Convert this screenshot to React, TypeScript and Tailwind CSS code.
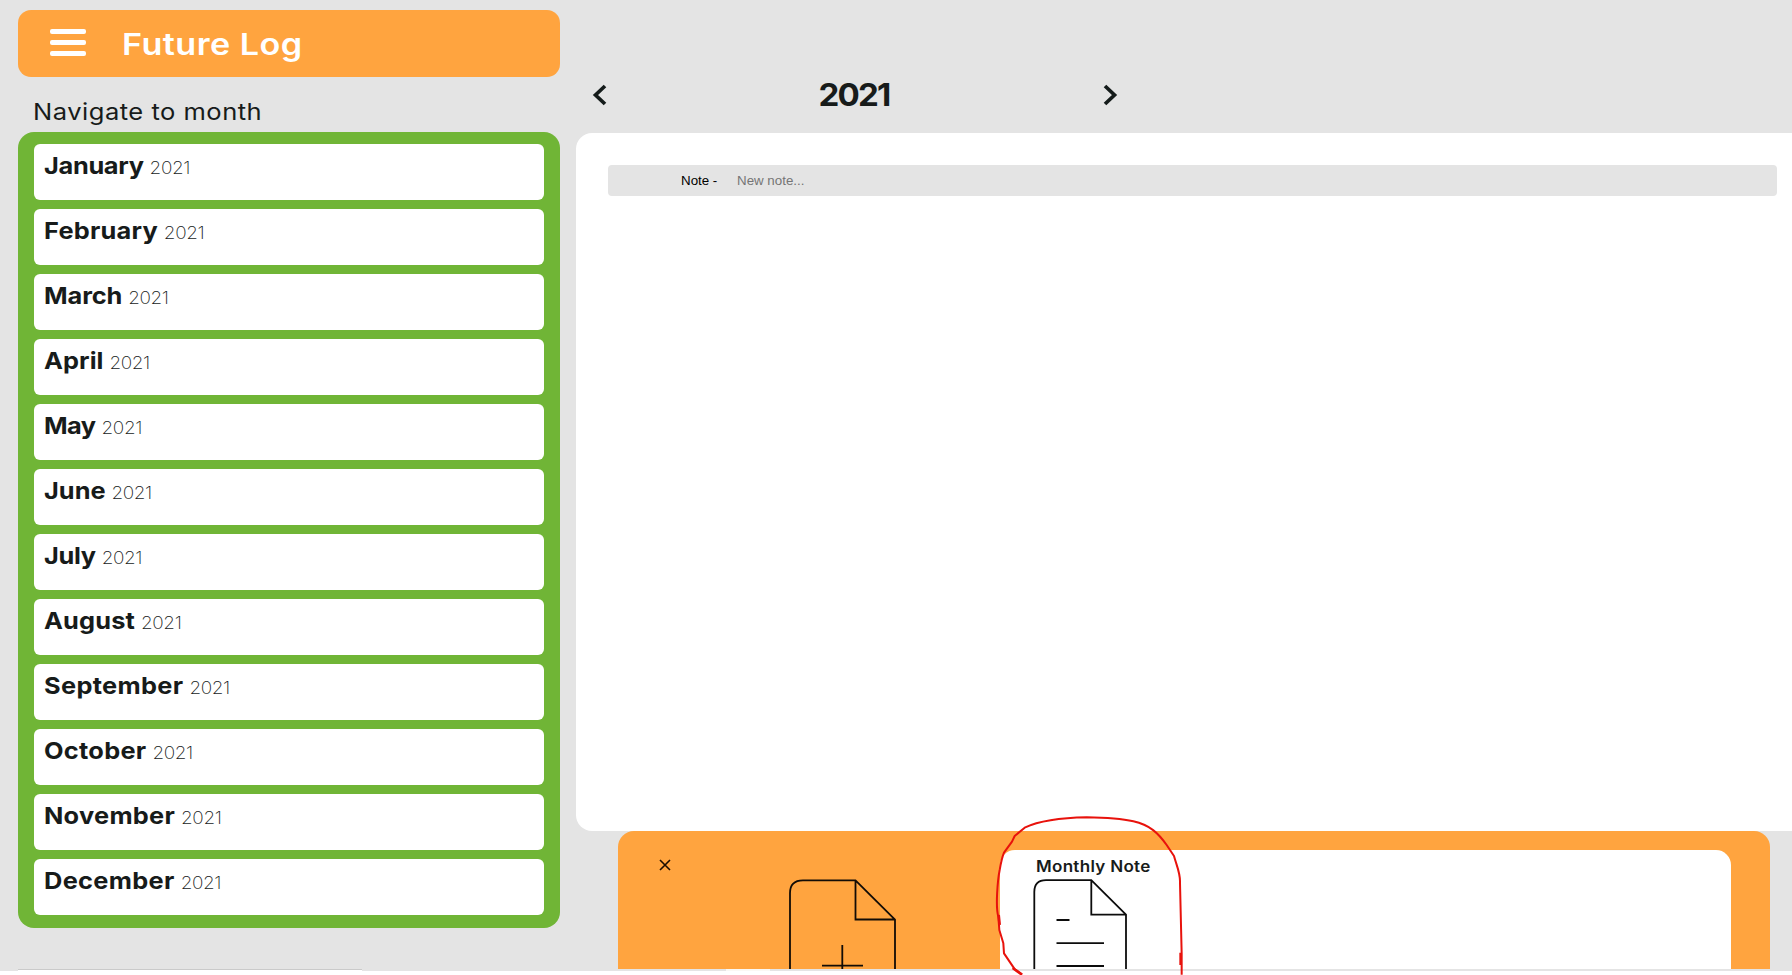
const months = [
  { name: 'January', tracking: 'tracking-[-0.3px]' },
  { name: 'February', tracking: 'tracking-[0.2px]' },
  { name: 'March', tracking: 'tracking-[-0.1px]' },
  { name: 'April', tracking: 'tracking-[0.05px]' },
  { name: 'May', tracking: 'tracking-[-0.5px]' },
  { name: 'June', tracking: 'tracking-[0px]' },
  { name: 'July', tracking: 'tracking-[-0.3px]' },
  { name: 'August', tracking: 'tracking-[0.15px]' },
  { name: 'September', tracking: 'tracking-[0.3px]' },
  { name: 'October', tracking: 'tracking-[0.25px]' },
  { name: 'November', tracking: 'tracking-[0.25px]' },
  { name: 'December', tracking: 'tracking-[0.3px]' },
];

function Sidebar() {
  return (
    <aside className="ml-[18px] w-[542px] shrink-0 pt-[10px]">
      <header className="flex h-[67px] items-center rounded-[13px] bg-[#ffa43f]">
        <button className="mb-[2px] ml-8 flex w-9 flex-col gap-[6px]" aria-label="Menu">
          <span className="h-[5px] rounded-[2px] bg-white" />
          <span className="h-[5px] rounded-[2px] bg-white" />
          <span className="h-[5px] rounded-[2px] bg-white" />
        </button>
        <h1 className="ml-[36px] origin-left scale-x-[1.14] whitespace-nowrap text-[30px] leading-9 font-semibold tracking-[0.4px] text-white">
          Future Log
        </h1>
      </header>
      <p className="mt-[20px] ml-[15px] h-[35px] w-[240px] origin-left scale-x-[1.11] whitespace-nowrap text-[23px] leading-[30px] tracking-[0.45px]">
        Navigate to month
      </p>
      <ul className="flex h-[796px] flex-col gap-[9px] rounded-[16px] bg-[#70b536] px-4 pt-3">
        {months.map((m) => (
          <li key={m.name} className="flex h-14 rounded-[6px] bg-white pt-[6px] pl-[9.5px]">
            <div className="flex h-8 origin-left scale-x-108 items-baseline gap-[5.5px] leading-8">
              <span className={`text-[23.5px] font-bold ${m.tracking}`}>{m.name}</span>
              <span className="text-[17.5px] font-extralight tracking-[-0.35px]">2021</span>
            </div>
          </li>
        ))}
      </ul>
    </aside>
  );
}

function YearNav() {
  return (
    <div className="flex h-[133px] items-start pt-[75px] pl-[15px]">
      <svg className="mt-[8px] h-6 w-[18px]" viewBox="0 0 18 24" fill="none" stroke="#141b1a" strokeWidth="3.7">
        <path d="M14 3 4.5 12 14 21" />
      </svg>
      <h2 className="w-[492px] scale-x-105 pr-[2px] text-center text-[31.5px] leading-10 font-bold tracking-[-1.8px]">
        2021
      </h2>
      <svg className="mt-[8px] h-6 w-[18px]" viewBox="0 0 18 24" fill="none" stroke="#141b1a" strokeWidth="3.7">
        <path d="M4 3 13.5 12 4 21" />
      </svg>
    </div>
  );
}

function Drawer() {
  return (
    <section className="ml-[42px] flex h-[138px] w-[1152px] overflow-hidden rounded-t-[16px] bg-[#ffa43f]">
      <div className="flex w-[382px] shrink-0">
        <svg className="mt-7 ml-[41px] h-3 w-3 shrink-0" viewBox="0 0 12 12" stroke="#1a0d00" strokeWidth="1.6">
          <path d="M1 1 11 11M11 1 1 11" />
        </svg>
        <svg className="mt-12 ml-[118px] h-[90px] w-[107px] shrink-0" viewBox="789 879 107 90" fill="none" stroke="#120c06" strokeWidth="1.8">
          <path d="M790 975V893Q790 880.3 803 880.3H855.5L895 919.5V975M855.5 880.3V919.5H895M842.3 945V975M822 965.6H863" />
        </svg>
      </div>
      <div className="mt-[19px] h-[119px] w-[731px] shrink-0 rounded-t-[15px] bg-white">
        <h3 className="ml-[35.5px] h-[29px] w-[160px] origin-left scale-x-110 pt-[5px] text-[15.5px] leading-6 font-semibold tracking-[0.25px] whitespace-nowrap">
          Monthly Note
        </h3>
        <svg className="ml-[33px] h-[90px] w-[94px]" viewBox="1033 879 94 90" fill="none" stroke="#0c0c0c" strokeWidth="1.8">
          <path d="M1034.3 975V892Q1034.3 880.2 1046 880.2H1091.3L1126 914.6V975M1091.3 880.2V914.6H1126M1056.5 920H1069.5M1056.5 943.2H1104M1056.5 966H1104" />
        </svg>
      </div>
    </section>
  );
}

function NotesPane() {
  return (
    <main className="ml-4 min-w-0 flex-1">
      <YearNav />
      <section className="h-[698px] rounded-l-[16px] bg-white pt-8 pl-8">
        <form className="flex h-[31px] w-[1169px] items-center rounded-[4px] bg-[#e4e4e4] pl-[73px] font-['Liberation_Sans',sans-serif] text-[13.33px] text-black">
          <label htmlFor="note" className="w-[56px]">
            Note -
          </label>
          <input
            id="note"
            placeholder="New note..."
            className="h-6 w-[900px] bg-transparent outline-none placeholder:text-[#757575]"
          />
        </form>
      </section>
      <Drawer />
    </main>
  );
}

export default function App() {
  return (
    <div className="relative h-[975px] w-[1792px] overflow-hidden bg-[#e4e4e4] font-['Inter',sans-serif] text-[#171b1a]">
      <div className="flex h-[969px]">
        <Sidebar />
        <NotesPane />
      </div>
      <div className="flex h-[6px] flex-col">
        <div className="flex h-[2px]">
          <span className="ml-[18px] w-[344px] border-t border-[#cacaca] bg-white" />
          <span className="ml-[364px] w-[44px] bg-[#faf8f4]" />
        </div>
        <div className="flex-1 bg-white" />
      </div>
      <svg className="pointer-events-none absolute top-[810px] left-[980px] h-[165px] w-[230px]" viewBox="0 0 690 495" fill="none" stroke="#e8120c" strokeWidth="6" strokeLinejoin="round">
        <path d="M126 494 103 476 72 430 70 400 58 360 55 320C46 290 53 210 59 180Q65 145 72 128L96 95 104 78 134 53C190 27 260 23 320 22 385 23 420 25 460 34 510 45 535 70 560 105L582 138C589 165 602 190 600 220L605 430V494" />
        <path d="M56 315 59 345M602 428V465M98 474 126 494" strokeWidth="8" />
      </svg>
    </div>
  );
}
